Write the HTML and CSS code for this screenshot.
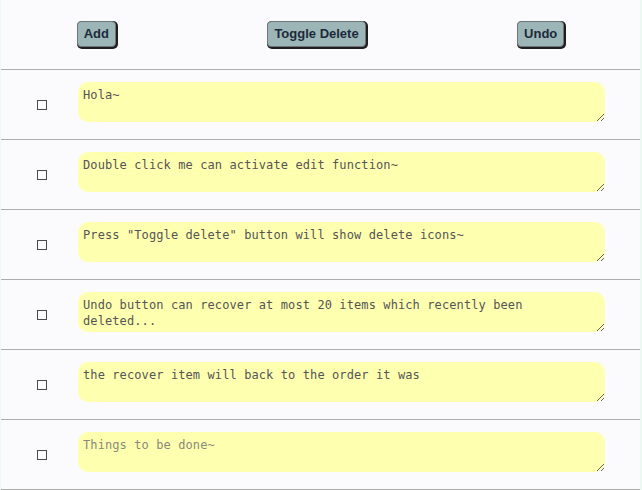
FILE: index.html
```html
<!DOCTYPE html>
<html>
<head>
<meta charset="utf-8">
<link rel="stylesheet" href="styles.css">
</head>
<body>
<div class="app">
  <div class="toolbar">
    <button class="btn">Add</button>
    <button class="btn">Toggle Delete</button>
    <button class="btn">Undo</button>
  </div>
  <ul class="list">
    <li class="item"><input class="check" type="checkbox"><textarea class="note">Hola~</textarea></li>
    <li class="item"><input class="check" type="checkbox"><textarea class="note">Double click me can activate edit function~</textarea></li>
    <li class="item"><input class="check" type="checkbox"><textarea class="note">Press "Toggle delete" button will show delete icons~</textarea></li>
    <li class="item"><input class="check" type="checkbox"><textarea class="note">Undo button can recover at most 20 items which recently been deleted...</textarea></li>
    <li class="item"><input class="check" type="checkbox"><textarea class="note">the recover item will back to the order it was</textarea></li>
    <li class="item"><input class="check" type="checkbox"><textarea class="note" placeholder="Things to be done~"></textarea></li>
  </ul>
</div>
</body>
</html>
```
FILE: styles.css
```css
html, body {
  margin: 0;
  padding: 0;
}
body {
  background: #eef8f2;
  font-family: "Liberation Sans", Arial, sans-serif;
}
.app {
  margin: 0 2px 0 1px;
  background: #fbfbfe;
  height: 490px;
}
.toolbar {
  height: 69px;
  display: flex;
  justify-content: space-around;
  align-items: center;
  border-bottom: 1px solid #adadad;
}
.btn {
  font-family: "Liberation Sans", Arial, sans-serif;
  font-weight: bold;
  font-size: 13px;
  color: #1c2a3a;
  background: #9cb6b8;
  border: 1px solid #6e7478;
  border-radius: 4px;
  box-shadow: 1px 1px 0 1px #1e1e1e;
  padding: 0 6px;
  height: 26px;
  margin-top: -2px;
}
.list {
  list-style: none;
  margin: 0;
  padding: 0;
}
.item {
  height: 69px;
  border-bottom: 1px solid #adadad;
  display: flex;
  align-items: center;
}
.check {
  appearance: none;
  -webkit-appearance: none;
  width: 10px;
  height: 10px;
  border: 1px solid #4a4a4a;
  background: transparent;
  margin: 0 0 0 36px;
  flex: none;
}
.note {
  margin: -6px 0 0 31px;
  width: 527px;
  height: 40px;
  box-sizing: border-box;
  border: none;
  border-radius: 10px;
  background: #ffffb0;
  padding: 5px 5px 3px;
  font-family: "DejaVu Sans Mono", monospace;
  font-size: 12px;
  letter-spacing: 0.1px;
  line-height: 16px;
  color: #555555;
  outline: none;
  overflow: hidden;
  flex: none;
}
.note::placeholder {
  color: #8a8a7a;
}
```
